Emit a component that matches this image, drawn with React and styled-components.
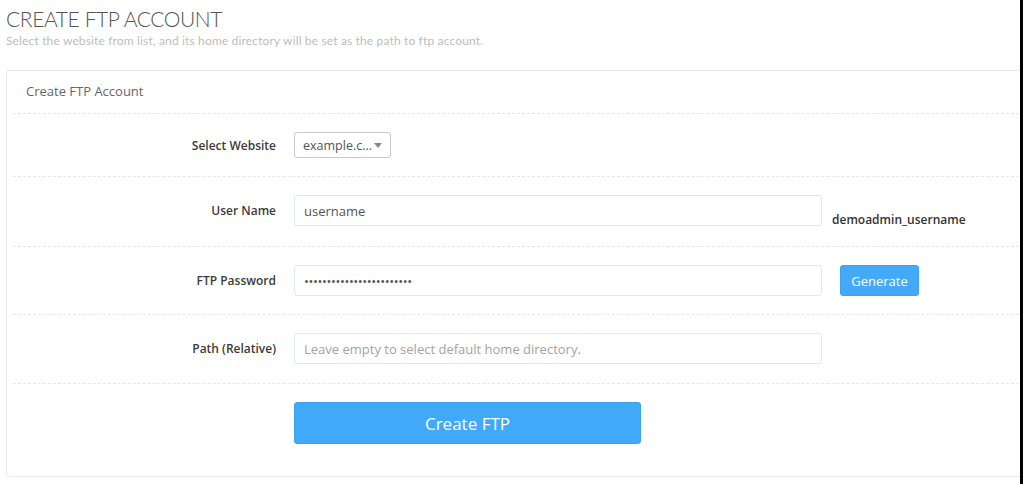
import React, {useState} from 'react';
import styled, {createGlobalStyle} from 'styled-components';

const GlobalStyle = createGlobalStyle`
  html, body {
    margin: 0;
    padding: 0;
    background: #000;
  }
  body {
    font-family: "Open Sans", "Liberation Sans", sans-serif;
  }
  * {
    box-sizing: border-box;
  }
`;

const Page = styled.div`
  width: 1020px;
  min-height: 100vh;
  background: #fff;
  padding: 6px 0 0 6px;
  overflow: hidden;
`;

const Heading = styled.h1`
  margin: 0;
  font-family: "Lato", "Open Sans", sans-serif;
  font-weight: 300;
  font-size: 21px;
  line-height: 26px;
  color: #555;
  letter-spacing: -0.4px;
`;

const SubTitle = styled.p`
  margin: 1px 0 0;
  font-family: "Lato", "Open Sans", sans-serif;
  font-weight: 400;
  font-size: 12px;
  line-height: 16px;
  color: #bdbdbd;
  letter-spacing: 0.15px;
`;

const Card = styled.section`
  margin-top: 21px;
  width: 1030px;
  border: 1px solid #e7ebee;
  border-radius: 3px;
  padding: 0 6px;
  min-height: 407px;
`;

const CardTitle = styled.div`
  height: 43px;
  padding: 0 0 3px 13px;
  display: flex;
  align-items: center;
  font-size: 13px;
  color: #666;
  border-bottom: 1px dashed #e3e8eb;
`;

const Row = styled.div`
  display: grid;
  grid-template-columns: 263px 528px auto;
  column-gap: 18px;
  align-items: center;
  padding: ${p => p.$top || 18}px 0 ${p => p.$bottom || 20}px;
  border-bottom: ${p => (p.$last ? 'none' : '1px dashed #e3e8eb')};
`;

const Label = styled.label`
  text-align: right;
  font-size: 12px;
  font-weight: 600;
  color: #3b3b3b;
`;

const Input = styled.input`
  width: 100%;
  height: 31px;
  border: 1px solid #e3e9ed;
  border-radius: 3px;
  padding: 0 9px;
  font-family: "Open Sans", sans-serif;
  font-size: 13px;
  color: #555;
  outline: none;
  &[type="password"] {
    letter-spacing: -0.4px;
  }
  &::placeholder {
    color: #a3a3a3;
  }
`;

const SelectBox = styled.div`
  width: 97px;
  height: 26px;
  border: 1px solid #c9c9c9;
  border-radius: 3px;
  display: flex;
  align-items: center;
  justify-content: space-between;
  padding: 0 8px 0 8px;
  font-size: 12.5px;
  color: #555;
`;

const Caret = styled.span`
  width: 0;
  height: 0;
  border-left: 4px solid transparent;
  border-right: 4px solid transparent;
  border-top: 5px solid #888;
`;

const Hint = styled.span`
  align-self: end;
  margin: 0 0 -2px -8px;
  font-size: 12px;
  font-weight: 600;
  color: #333;
`;

const SmallButton = styled.button`
  justify-self: start;
  width: 79px;
  height: 31px;
  border: 1px solid #3da3ef;
  border-radius: 3px;
  background: #42aaf6;
  color: #fff;
  font-family: "Open Sans", sans-serif;
  font-size: 13px;
  cursor: pointer;
`;

const BigButton = styled.button`
  width: 347px;
  height: 42px;
  border: 1px solid #3aa2ee;
  border-radius: 3px;
  background: #41aaf8;
  color: #fff;
  font-family: "Open Sans", sans-serif;
  font-size: 17px;
  cursor: pointer;
`;

const App = () => {
    const [user, setUser] = useState('username');
    const [pass, setPass] = useState('xxxxxxxxxxxxxxxxxxxxxxxx');
    const [path, setPath] = useState('');

    return (
        <>
            <GlobalStyle/>
            <Page>
                <Heading>CREATE FTP ACCOUNT</Heading>
                <SubTitle>Select the website from list, and its home directory will be set as the path to ftp account.</SubTitle>
                <Card>
                    <CardTitle>Create FTP Account</CardTitle>
                    <Row $top={18} $bottom={18}>
                        <Label>Select Website</Label>
                        <SelectBox>
                            <span>example.c...</span>
                            <Caret/>
                        </SelectBox>
                    </Row>
                    <Row>
                        <Label>User Name</Label>
                        <Input value={user} onChange={e => setUser(e.target.value)}/>
                        <Hint>demoadmin_username</Hint>
                    </Row>
                    <Row $bottom={18}>
                        <Label>FTP Password</Label>
                        <Input type="password" value={pass} onChange={e => setPass(e.target.value)}/>
                        <SmallButton>Generate</SmallButton>
                    </Row>
                    <Row $bottom={19}>
                        <Label>Path (Relative)</Label>
                        <Input
                            placeholder="Leave empty to select default home directory."
                            value={path}
                            onChange={e => setPath(e.target.value)}
                        />
                    </Row>
                    <Row $last $top={18} $bottom={32}>
                        <span/>
                        <div><BigButton>Create FTP</BigButton></div>
                    </Row>
                </Card>
            </Page>
        </>
    );
};

export default App;
